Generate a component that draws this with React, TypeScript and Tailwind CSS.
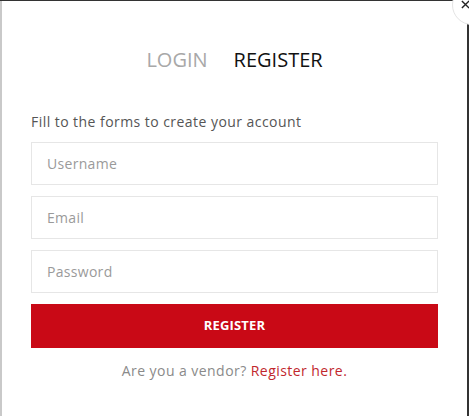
import React from 'react'

const FONT = { fontFamily: '"Open Sans", "Liberation Sans", sans-serif' }

function Field({ placeholder, type = 'text' }: { placeholder: string; type?: string }) {
  return (
    <input
      type={type}
      placeholder={placeholder}
      className="h-[43px] w-full border border-[#e6e6e6] bg-white px-[15px] text-[14px] tracking-[0.3px] text-[#333] outline-none placeholder:text-[#9a9a9a]"
    />
  )
}

export default function App() {
  return (
    <div className="relative h-[416px] w-[469px] overflow-hidden bg-[#333] pt-px" style={FONT}>
      <div className="h-full w-[467px] border-l-2 border-[#c9c9c9] bg-white px-[29px]">
        {/* Tabs */}
        <div className="flex justify-center gap-[26px] pt-[45px] text-[20px] font-medium leading-[28px]">
          <span className="text-[#a8a8a8]">LOGIN</span>
          <span className="text-[#111]">REGISTER</span>
        </div>

        <p className="mt-[38px] text-[14px] leading-[20px] tracking-[0.45px] text-[#555]">
          Fill to the forms to create your account
        </p>

        <form className="mt-[10px] flex flex-col gap-[11px]" onSubmit={(e) => e.preventDefault()}>
          <Field placeholder="Username" />
          <Field placeholder="Email" type="email" />
          <Field placeholder="Password" type="password" />
          <button
            type="submit"
            className="h-[44px] w-full bg-[#c90916] text-[13px] font-bold tracking-[0.2px] text-white"
          >
            REGISTER
          </button>
        </form>

        <p className="mt-[13px] text-center text-[14px] leading-[20px] tracking-[0.45px] text-[#8a8a8a]">
          Are you a vendor? <a href="#" className="text-[#c1272d]">Register here.</a>
        </p>
      </div>

      {/* Close */}
      <button className="absolute left-[452px] top-[-15px] flex h-[40px] w-[40px] items-start rounded-full border border-[#e4e4e4] bg-white pl-[8px] pt-[14px]">
        <svg width="9" height="9" viewBox="0 0 10 10" stroke="#222" strokeWidth="1.6">
          <path d="M1 1l8 8M9 1l-8 8" />
        </svg>
      </button>
    </div>
  )
}
